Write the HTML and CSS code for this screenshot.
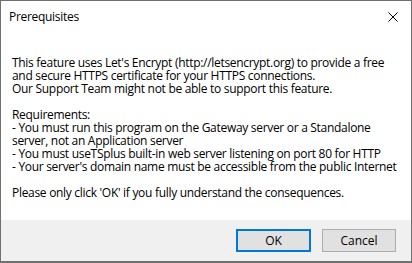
FILE: index.html
```html
<!DOCTYPE html>
<html lang="en">
<head>
  <meta charset="UTF-8">
  <title>Prerequisites</title>
  <link rel="stylesheet" href="styles.css">
</head>
<body>
  <div class="window">
    <div class="titlebar">
      <span class="title">Prerequisites</span>
      <svg class="close" width="10" height="10" viewBox="0 0 10 10">
        <path d="M0.5 0.5 L9.5 9.5 M9.5 0.5 L0.5 9.5" stroke="#000" stroke-width="1" fill="none"/>
      </svg>
    </div>

    <div class="content">
      <p>This feature uses Let's Encrypt (http://letsencrypt.org) to provide a free<br>
      and secure HTTPS certificate for your HTTPS connections.<br>
      Our Support Team might not be able to support this feature.</p>

      <p>Requirements:<br>
      - You must run this program on the Gateway server or a Standalone<br>
      server, not an Application server<br>
      - You must useTSplus built-in web server listening on port 80 for HTTP<br>
      - Your server's domain name must be accessible from the public Internet</p>

      <p>Please only click 'OK' if you fully understand the consequences.</p>
    </div>

    <div class="footer">
      <button class="btn default">OK</button>
      <button class="btn">Cancel</button>
    </div>
  </div>
</body>
</html>
```

FILE: styles.css
```css
body {
  margin: 0;
  padding: 0;
  font-family: 'Open Sans', 'Noto Sans', sans-serif;
  font-size: 12px;
  color: #000;
  background: #fff;
}

.window {
  width: 412px;
  height: 263px;
  box-sizing: border-box;
  border: 1px solid #707070;
  border-bottom-width: 2px;
  display: flex;
  flex-direction: column;
  background: #fff;
  overflow: hidden;
}

.titlebar {
  height: 31px;
  display: flex;
  align-items: center;
  justify-content: space-between;
  padding: 0 13px 0 8px;
  flex-shrink: 0;
}

.title {
  font-size: 12px;
  letter-spacing: -0.3px;
}

.content {
  flex: 1;
  padding: 24px 11px 0;
  letter-spacing: -0.3px;
  white-space: nowrap;
}

.content p {
  margin: 0 0 13px;
  line-height: 13px;
}

.footer {
  height: 41px;
  background: #f0f0f0;
  display: flex;
  justify-content: flex-end;
  align-items: center;
  gap: 11px;
  padding-right: 15px;
  flex-shrink: 0;
}

.btn {
  width: 74px;
  height: 23px;
  box-sizing: border-box;
  background: #e1e1e1;
  border: 1px solid #adadad;
  font-family: inherit;
  font-size: 12px;
  color: #000;
  padding: 0;
}

.btn.default {
  border: 2px solid #0078d7;
  width: 75px;
}
```
